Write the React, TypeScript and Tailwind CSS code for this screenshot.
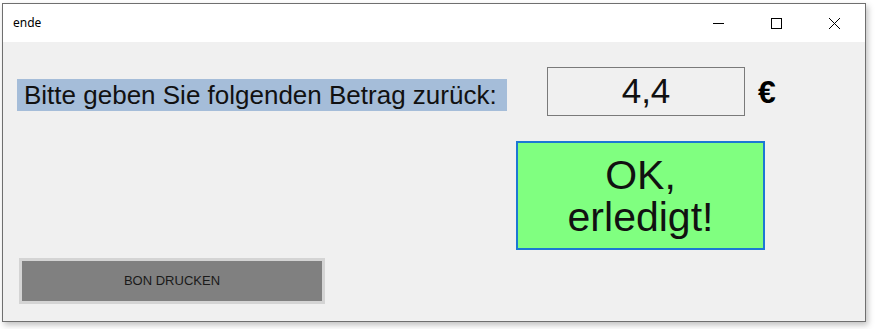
function TitleBar() {
    return (
        <div className="flex h-[38px] items-center bg-white">
            <span className="pl-[10px] text-[12px] text-black" style={{ fontFamily: '"Noto Sans", sans-serif' }}>
                ende
            </span>
            <div className="ml-auto flex h-full pr-[2px]">
                <div className="flex w-[58px] items-center justify-center">
                    <svg width="11" height="11" viewBox="0 0 11 11">
                        <line x1="0" y1="5.5" x2="11" y2="5.5" stroke="#000" strokeWidth="1" />
                    </svg>
                </div>
                <div className="flex w-[58px] items-center justify-center">
                    <svg width="11" height="11" viewBox="0 0 11 11">
                        <rect x="0.5" y="0.5" width="10" height="10" fill="none" stroke="#000" strokeWidth="1" />
                    </svg>
                </div>
                <div className="flex w-[58px] items-center justify-center">
                    <svg width="11" height="11" viewBox="0 0 11 11">
                        <path d="M0 0 L11 11 M11 0 L0 11" stroke="#000" strokeWidth="1" />
                    </svg>
                </div>
            </div>
        </div>
    );
}

export default function App() {
    return (
        <div className="h-[329px] w-[875px] bg-white" style={{ fontFamily: '"Liberation Sans", Arial, sans-serif' }}>
            <div className="ml-[2px] mt-[3px] flex h-[319px] w-[864px] flex-col border border-[#6f6f6f] shadow-[2px_3px_6px_rgba(0,0,0,0.25)]">
                <TitleBar />
                <div className="flex-1 bg-[#f0f0f0]">
                    <div className="flex h-[74px] items-start pt-[25px]">
                        <div className="ml-[14px] mt-[12px] flex h-[32px] w-[490px] items-center bg-[#a5bdd9] pl-[7px] text-[26px] text-[#111]">
                            Bitte geben Sie folgenden Betrag zurück:
                        </div>
                        <div className="ml-[40px] flex h-[49px] w-[198px] items-center justify-center border border-[#7a7a7a] text-[35px] text-[#111]">
                            4,4
                        </div>
                        <div className="ml-[13px] mt-[6px] text-[32px] leading-[38px] font-bold text-black">€</div>
                    </div>
                    <div className="flex pl-[513px] pt-[25px]">
                        <button className="flex h-[109px] w-[249px] flex-col items-center justify-center border-2 border-[#1c78d4] bg-[#80ff80] text-[41px] leading-[42px] text-[#111]">
                            <span>OK,</span>
                            <span>erledigt!</span>
                        </button>
                    </div>
                    <div className="pl-[16px] pt-[8px]">
                        <button className="flex h-[46px] w-[306px] items-center justify-center border-[3px] border-[#d4d4d4] bg-[#808080] text-[13px] text-[#1a1a1a]">
                            BON DRUCKEN
                        </button>
                    </div>
                </div>
            </div>
        </div>
    );
}
